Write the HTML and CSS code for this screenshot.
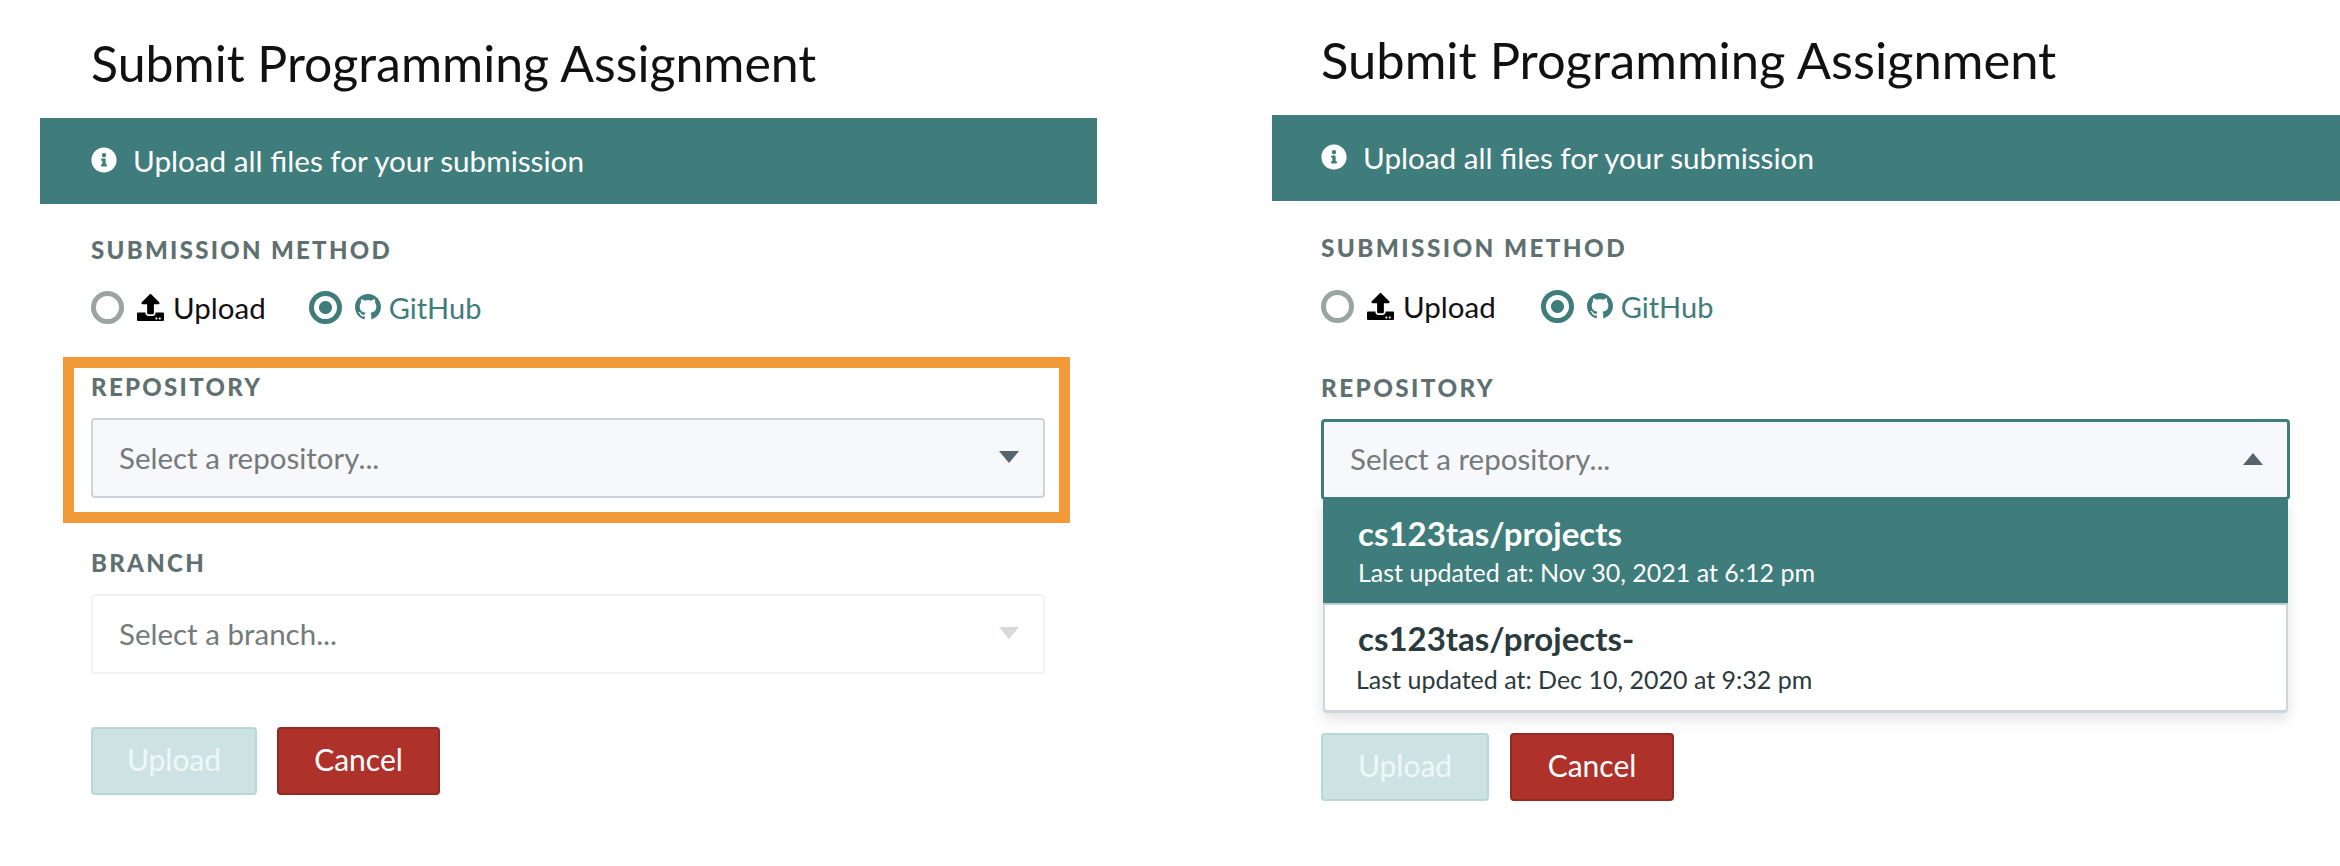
FILE: index.html
```html
<!DOCTYPE html>
<html lang="en">
<head>
<meta charset="utf-8">
<title>Submit Programming Assignment</title>
<link rel="stylesheet" href="styles.css">
</head>
<body>
<svg class="defs" aria-hidden="true">
  <symbol id="i-info" viewBox="0 0 512 512"><path d="M256 8C119.043 8 8 119.083 8 256c0 136.997 111.043 248 248 248s248-111.003 248-248C504 119.083 392.957 8 256 8zm0 110c23.196 0 42 18.804 42 42s-18.804 42-42 42-42-18.804-42-42 18.804-42 42-42zm56 254c0 6.627-5.373 12-12 12h-88c-6.627 0-12-5.373-12-12v-24c0-6.627 5.373-12 12-12h12v-64h-12c-6.627 0-12-5.373-12-12v-24c0-6.627 5.373-12 12-12h64c6.627 0 12 5.373 12 12v100h12c6.627 0 12 5.373 12 12v24z"/></symbol>
  <symbol id="i-upload" viewBox="0 0 512 512"><path d="M296 384h-80c-13.3 0-24-10.7-24-24V192h-87.7c-17.8 0-26.7-21.5-14.1-34.1L242.3 5.7c7.5-7.5 19.8-7.5 27.3 0l152.2 152.2c12.6 12.6 3.7 34.1-14.1 34.1H320v168c0 13.3-10.7 24-24 24zm216-8v112c0 13.3-10.7 24-24 24H24c-13.3 0-24-10.7-24-24V376c0-13.3 10.7-24 24-24h136v8c0 30.9 25.1 56 56 56h80c30.9 0 56-25.1 56-56v-8h136c13.3 0 24 10.7 24 24zm-124 88c0-11-9-20-20-20s-20 9-20 20 9 20 20 20 20-9 20-20zm64 0c0-11-9-20-20-20s-20 9-20 20 9 20 20 20 20-9 20-20z"/></symbol>
  <symbol id="i-github" viewBox="0 0 16 16"><path d="M8 0C3.58 0 0 3.58 0 8c0 3.54 2.29 6.53 5.47 7.59.4.07.55-.17.55-.38 0-.19-.01-.82-.01-1.49-2.01.37-2.53-.49-2.69-.94-.09-.23-.48-.94-.82-1.13-.28-.15-.68-.52-.01-.53.63-.01 1.08.58 1.23.82.72 1.21 1.87.87 2.33.66.07-.52.28-.87.51-1.07-1.78-.2-3.64-.89-3.64-3.95 0-.87.31-1.59.82-2.15-.08-.2-.36-1.02.08-2.12 0 0 .67-.21 2.2.82.64-.18 1.32-.27 2-.27.68 0 1.36.09 2 .27 1.53-1.04 2.2-.82 2.2-.82.44 1.1.16 1.92.08 2.12.51.56.82 1.27.82 2.15 0 3.07-1.87 3.75-3.65 3.95.29.25.54.73.54 1.48 0 1.07-.01 1.93-.01 2.2 0 .21.15.46.55.38A8.013 8.013 0 0016 8c0-4.42-3.58-8-8-8z"/></symbol>
</svg>
<main class="page">
  <section class="panel panel-left">
    <h1 class="title">Submit Programming Assignment</h1>
    <div class="banner"><svg class="ico-info"><use href="#i-info"/></svg><span>Upload all files for your submission</span></div>
    <div class="body">
      <div class="label">SUBMISSION METHOD</div>
      <div class="methods">
        <div class="method"><span class="radio"></span><svg class="ico-upload"><use href="#i-upload"/></svg><span>Upload</span></div>
        <div class="method method-on"><span class="radio radio-on"></span><svg class="ico-github"><use href="#i-github"/></svg><span>GitHub</span></div>
      </div>
      <div class="field field-marked">
        <div class="label">REPOSITORY</div>
        <div class="select"><span>Select a repository...</span><i class="caret"></i></div>
      </div>
      <div class="field field-branch">
        <div class="label">BRANCH</div>
        <div class="select select-off"><span>Select a branch...</span><i class="caret caret-off"></i></div>
      </div>
      <div class="actions">
        <button class="btn btn-upload">Upload</button>
        <button class="btn btn-cancel">Cancel</button>
      </div>
    </div>
  </section>
  <section class="panel panel-right">
    <h1 class="title">Submit Programming Assignment</h1>
    <div class="banner"><svg class="ico-info"><use href="#i-info"/></svg><span>Upload all files for your submission</span></div>
    <div class="body">
      <div class="label">SUBMISSION METHOD</div>
      <div class="methods">
        <div class="method"><span class="radio"></span><svg class="ico-upload"><use href="#i-upload"/></svg><span>Upload</span></div>
        <div class="method method-on"><span class="radio radio-on"></span><svg class="ico-github"><use href="#i-github"/></svg><span>GitHub</span></div>
      </div>
      <div class="field field-open">
        <div class="label">REPOSITORY</div>
        <div class="select select-open"><span>Select a repository...</span><i class="caret caret-up"></i></div>
        <div class="menu">
          <div class="option option-on"><div class="opt-name">cs123tas/projects</div><div class="opt-meta">Last updated at: Nov 30, 2021 at 6:12 pm</div></div>
          <div class="option"><div class="opt-name">cs123tas/projects-</div><div class="opt-meta opt-meta-last">Last updated at: Dec 10, 2020 at 9:32 pm</div></div>
        </div>
      </div>
      <div class="actions actions-open">
        <button class="btn btn-upload">Upload</button>
        <button class="btn btn-cancel">Cancel</button>
      </div>
    </div>
  </section>
</main>
</body>
</html>
```
FILE: styles.css
```css
* { box-sizing: border-box; }
html, body { margin: 0; height: 100%; background: #fff; overflow: hidden; }
body { font-family: Lato, "Open Sans", sans-serif; color: #111; }
.defs { display: none; }
.page { display: flex; height: 866px; padding-left: 40px; gap: 175px; }
.panel { display: flex; flex-direction: column; }
.panel-left { width: 1057px; padding-top: 33px; }
.panel-right { width: 1068px; padding-top: 29px; }

.title { margin: 0 0 24px 51px; font-size: 50px; line-height: 61px; font-weight: 400; color: #111; }
.panel-right .title { margin: 0 0 25px 49px; font-size: 50.7px; }

.banner { display: flex; align-items: center; height: 86px; padding: 0 0 2px 51px; background: #3e7d7b; color: #fff; font-size: 29.7px; }
.panel-right .banner { padding-left: 49px; }
.ico-info { width: 26px; height: 26px; margin-right: 16px; fill: #fff; }

.body { display: flex; flex-direction: column; padding: 32px 52px 0 51px; }
.panel-right .body { padding: 33px 50px 0 49px; }
.label { font-size: 24px; line-height: 28px; font-weight: 900; letter-spacing: 2.3px; color: #5f7070; }
.panel-right .label { font-size: 24.3px; letter-spacing: 2.4px; }

.methods { display: flex; gap: 43px; margin-top: 26px; height: 34px; font-size: 29.5px; }
.panel-right .methods { gap: 45px; margin-top: 27px; }
.method { display: flex; align-items: center; }
.method-on { color: #3e7d7b; font-size: 29px; }
.radio { width: 33px; height: 33px; border: 5px solid #9aa5a3; border-radius: 50%; margin-right: 13px; }
.radio-on { border-color: #3e7d7b; background: radial-gradient(circle, #3e7d7b 0 6px, #fff 7px); }
.ico-upload { width: 27px; height: 27px; margin-right: 9px; fill: #000; }
.ico-github { width: 26px; height: 26px; margin-right: 8px; fill: #3e7d7b; }

.field { position: relative; display: flex; flex-direction: column; gap: 17px; margin-top: 49px; }
.field-open { margin-top: 51px; }
.field-marked::after { content: ""; position: absolute; left: -28px; right: -25px; top: -16px; bottom: -25px; border: 11px solid #f39a38; pointer-events: none; }
.field-branch { margin-top: 51px; }

.select { display: flex; align-items: center; justify-content: space-between; height: 80px; padding: 0 24px 2px 26px; background: #f7f8fb; border: 2px solid #cdd2dc; border-radius: 4px; color: #757a7a; font-size: 29.5px; }
.select-off { background: #fff; border-color: #f1f2f6; }
.select-open { border: 3px solid #3e7d7b; height: 81px; }
.caret { width: 0; height: 0; border-left: 10px solid transparent; border-right: 10px solid transparent; border-top: 12px solid #56636a; }
.caret-off { border-top-color: #d5dadd; }
.caret-up { border-top: 0; border-bottom: 12px solid #56636a; }

.menu { display: flex; flex-direction: column; margin: -17px 2px 0; background: #fff; border: solid #cfd5dd; border-width: 0 2px 3px; border-radius: 0 0 4px 4px; box-shadow: 0 6px 14px rgba(60, 70, 80, .16); }
.option { height: 105px; padding: 12px 33px 0; color: #2b3a3c; }
.option-on { height: 105px; margin: 0 -2px; padding-left: 35px; background: #3e7d7b; color: #fff; border-bottom: 2px solid #b9cfd2; }
.opt-name { font-size: 33px; line-height: 42px; font-weight: 700; }
.opt-meta { font-size: 25px; line-height: 36px; }
.opt-meta-last { margin: 2px 0 0 -2px; }

.actions { display: flex; gap: 20px; margin-top: 53px; }
.actions-open { gap: 21px; margin-top: 20px; }
.btn { height: 68px; padding: 0 0 4px; border-radius: 4px; font: inherit; font-size: 30px; color: #fff; }
.btn-upload { width: 166px; background: #cde3e3; border: 2px solid #b7d8d9; color: #eff7f7; }
.btn-cancel { width: 163px; background: #ae322a; border: 2px solid #8f2a25; }
.actions-open .btn-upload { width: 168px; }
.actions-open .btn-cancel { width: 164px; }
```
